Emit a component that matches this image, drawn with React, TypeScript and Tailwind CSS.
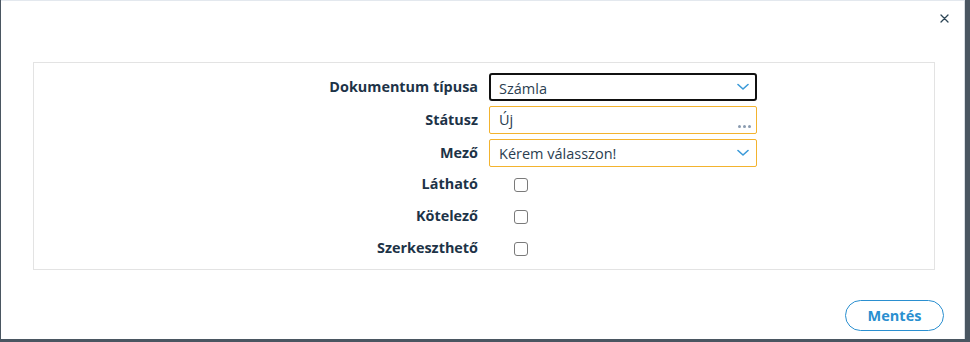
import React from "react";

function Chevron() {
  return (
    <svg width="12" height="8" viewBox="0 0 12 8" className="shrink-0">
      <path d="M1 1.5 L6 6 L11 1.5" fill="none" stroke="#3a9ad9" strokeWidth="1.6" strokeLinecap="round" strokeLinejoin="round" />
    </svg>
  );
}

function Checkbox() {
  return <div className="w-[14px] h-[14px] rounded-[3px] border-[1.5px] border-[#7a7a7a] bg-white" />;
}

function Label({ children }: { children: React.ReactNode }) {
  return (
    <div className="w-[444px] text-right text-[14.4px] font-bold text-[#1d3347] leading-none">{children}</div>
  );
}

export default function App() {
  return (
    <div className="w-[970px] h-[342px] bg-[#4a5661] overflow-hidden" style={{ fontFamily: '"Open Sans", "Noto Sans", sans-serif' }}>
      <div className="ml-[1px] w-[964px] h-[339px] bg-white border-t border-t-[#e3e8ee] border-r border-r-[#d8dde2] flex flex-col relative">
        <button className="absolute right-[15px] top-[13px] text-[#2d4656]">
          <svg width="9" height="9" viewBox="0 0 9 9">
            <path d="M1 1 L8 8 M8 1 L1 8" stroke="#2d4656" strokeWidth="1.3" strokeLinecap="round" />
          </svg>
        </button>
        <div className="mt-[61px] ml-[32px] w-[902px] h-[208px] border border-[#e3e3e3] pt-[10px] flex flex-col">
          <div className="flex items-center h-[28px]">
            <Label>Dokumentum típusa</Label>
            <div className="ml-[11px] w-[268px] h-[28px] rounded-[3px] border-2 border-[#111] flex items-center justify-between pl-[8px] pr-[6px]">
              <span className="text-[14.5px] text-[#2b3e50] mt-[3px]">Számla</span>
              <Chevron />
            </div>
          </div>
          <div className="flex items-center h-[28px] mt-[5px]">
            <Label>Státusz</Label>
            <div className="ml-[11px] w-[268px] h-[28px] rounded-[2px] border border-[#f3b32e] flex items-center justify-between pl-[9px] pr-[5px] relative">
              <span className="text-[14.5px] text-[#2b3e50]">Új</span>
              <div className="absolute right-[5px] bottom-[5px] flex gap-[2px]">
                <div className="w-[3px] h-[3px] rounded-full bg-[#8a9bb0]" />
                <div className="w-[3px] h-[3px] rounded-full bg-[#8a9bb0]" />
                <div className="w-[3px] h-[3px] rounded-full bg-[#8a9bb0]" />
              </div>
            </div>
          </div>
          <div className="flex items-center h-[28px] mt-[5px]">
            <Label>Mező</Label>
            <div className="ml-[11px] w-[268px] h-[28px] rounded-[2px] border border-[#f3b32e] flex items-center justify-between pl-[9px] pr-[7px]">
              <span className="text-[14.5px] text-[#2b3e50] mt-[1px]">Kérem válasszon!</span>
              <Chevron />
            </div>
          </div>
          <div className="flex items-center h-[27px] mt-[4px]">
            <Label>Látható</Label>
            <div className="ml-[36px]"><Checkbox /></div>
          </div>
          <div className="flex items-center h-[27px] mt-[5px]">
            <Label>Kötelező</Label>
            <div className="ml-[36px]"><Checkbox /></div>
          </div>
          <div className="flex items-center h-[27px] mt-[5px]">
            <Label>Szerkeszthető</Label>
            <div className="ml-[36px]"><Checkbox /></div>
          </div>
        </div>
        <div className="flex justify-end mt-[30px] mr-[20px]">
          <button className="w-[99px] h-[31px] rounded-full border border-[#2a8fd0] text-[#2a8fd0] text-[14.5px] font-bold flex items-center justify-center">
            Mentés
          </button>
        </div>
      </div>
    </div>
  );
}
